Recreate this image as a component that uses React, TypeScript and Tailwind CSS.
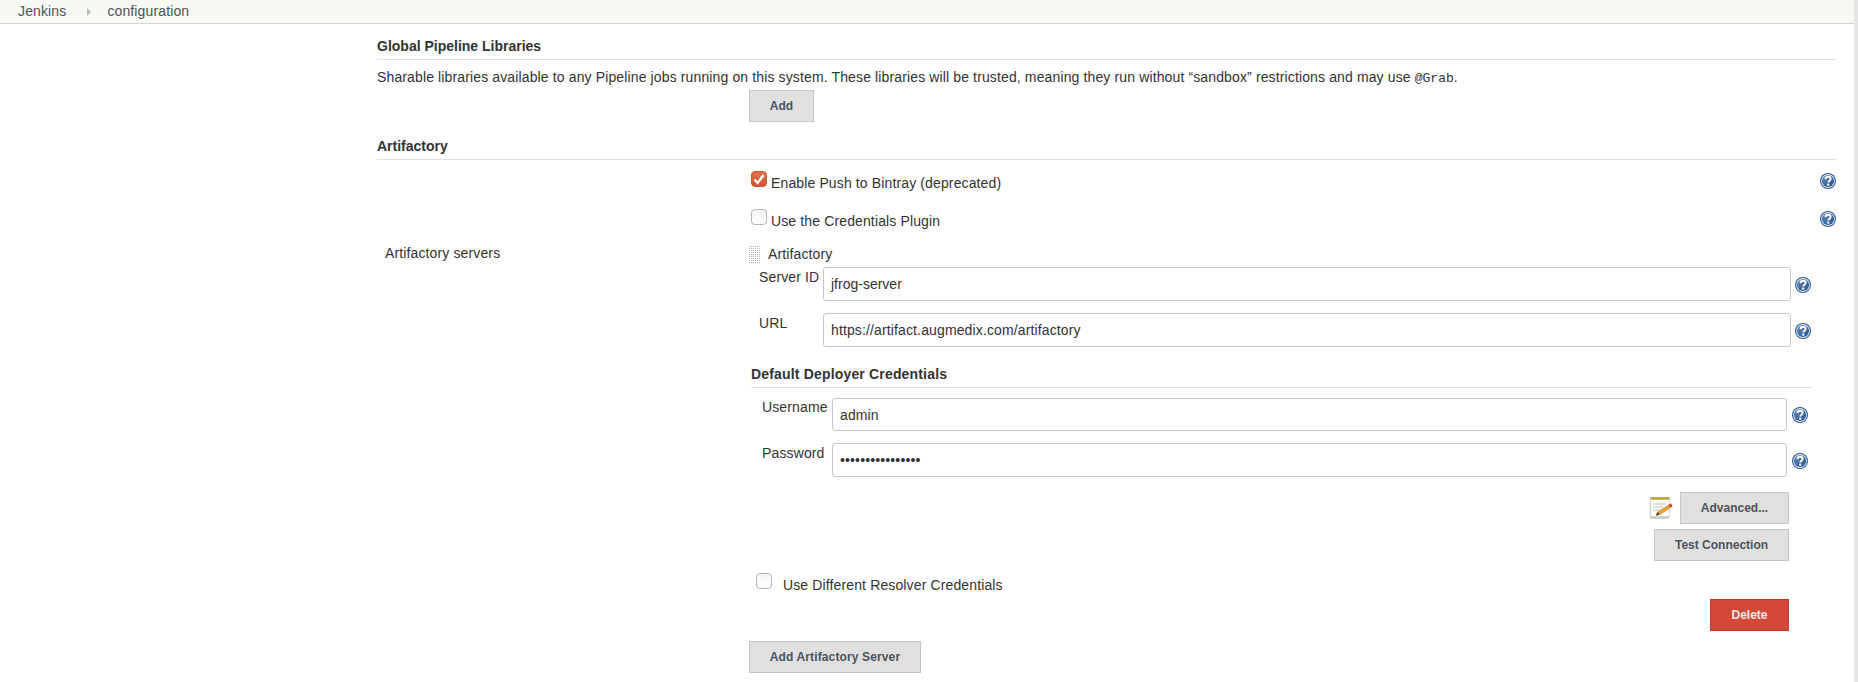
import React from 'react';

const sans = "font-['Liberation_Sans',Arial,sans-serif]";

// Jenkins help bubble
const HelpIcon: React.FC = () => (
  <svg width="16" height="16" viewBox="0 0 16 16" className="block shrink-0">
    <defs>
      <linearGradient id="helpFill" x1="0" y1="0" x2="1" y2="1">
        <stop offset="0" stopColor="#6a8cbb" />
        <stop offset="1" stopColor="#22508f" />
      </linearGradient>
    </defs>
    <circle cx="8" cy="8" r="8" fill="#2f5a98" />
    <circle cx="8" cy="8" r="6.9" fill="#e8eef6" />
    <circle cx="8" cy="8" r="6.1" fill="url(#helpFill)" />
    <path d="M5.5 6.1C5.6 4.5 6.7 3.7 8.1 3.7c1.5 0 2.5.9 2.5 2.2 0 1.9-2.3 1.8-2.3 3.7" fill="none" stroke="#fff" strokeWidth="1.9" />
    <rect x="7.2" y="10.6" width="2.1" height="2" fill="#fff" />
  </svg>
);

const NotepadIcon: React.FC = () => (
  <svg width="24" height="22" viewBox="0 0 24 22" className="block shrink-0">
    <rect x="0.5" y="4" width="20" height="18" rx="2" fill="#cfcfca" />
    <rect x="1.5" y="1" width="19" height="18.5" fill="#fbfbf6" stroke="#c9c9c2" strokeWidth="0.6" />
    <rect x="1.5" y="0" width="19" height="2.8" fill="#bfa64c" />
    <path d="M4 7h13M4 10h10M4 13h6" stroke="#c6c6c6" strokeWidth="1" />
    <path d="M7 18.5l1.5-3.5L19.5 8l2.4 2.6L11 17.5z" fill="#e8a33a" stroke="#b3742a" strokeWidth="0.4" />
    <path d="M19.5 8l2.4 2.6L23.6 9l-2-2.6z" fill="#d0352c" />
    <path d="M7 18.5l1.5-3.5 2.4 2.5z" fill="#4a4036" />
  </svg>
);

const DragHandle: React.FC = () => (
  <svg width="11" height="17" viewBox="0 0 11 17" className="block shrink-0">
    <defs>
      <pattern id="dragDots" width="2" height="2" patternUnits="userSpaceOnUse">
        <rect width="1" height="1" fill="#b4b4b4" />
      </pattern>
    </defs>
    <rect width="11" height="17" fill="url(#dragDots)" />
  </svg>
);

const Checkbox: React.FC<{ checked?: boolean }> = ({ checked }) =>
  checked ? (
    <span className="flex h-4 w-4 shrink-0 items-center justify-center rounded-[4px] border border-[#c9562f] bg-gradient-to-b from-[#e2734c] to-[#cc5530]">
      <svg width="12" height="12" viewBox="0 0 12 12">
        <path d="M1.5 6.5L4.6 10 10.5 2" fill="none" stroke="#fff" strokeWidth="2.2" />
      </svg>
    </span>
  ) : (
    <span className="h-4 w-4 shrink-0 rounded-[4px] border border-[#b8b8b8] bg-gradient-to-b from-[#f4f4f4] to-white" />
  );

const Btn: React.FC<{ className?: string; children: React.ReactNode }> = ({ className, children }) => (
  <button className={`block h-8 border border-[#c6c6c6] bg-[#e0e0e0] text-[12px] font-bold text-[#4d545d] ${className ?? ''}`}>
    {children}
  </button>
);

const Field: React.FC<{ value: string; height?: 'short' | 'tall'; className?: string }> = ({ value, height = 'tall', className }) => (
  <div className={`flex min-w-0 flex-1 items-center rounded-[3px] border border-[#c8c8c8] pl-[7px] pt-[1px] text-[14px] text-[#333] ${height === 'tall' ? 'h-[34px]' : 'h-[33px]'} ${className ?? ''}`}>
    {value}
  </div>
);

const SectionHead: React.FC<{ title: string; className?: string }> = ({ title, className }) => (
  <div className={`flex h-[22px] items-start border-b border-[#e0e0e0] text-[14px] font-bold leading-[16px] text-[#333] ${className ?? 'tracking-normal'}`}>
    {title}
  </div>
);

export default function App() {
  return (
    <div className={`${sans} relative h-[682px] overflow-hidden bg-white text-[14px] tracking-[0.13px] text-[#333]`}>
      {/* breadcrumb bar */}
      <div className="flex h-6 items-center border-b border-[#d5d8d2] bg-[#f6faf2] text-[14px] text-[#4d545d]">
        <span className="ml-[18px]">Jenkins</span>
        <span className="ml-[21px] h-0 w-0 border-y-[4px] border-l-[4px] border-y-transparent border-l-[#b8bdb4]" />
        <span className="ml-[16px]">configuration</span>
      </div>

      <div className="ml-[377px] mr-[22px] pt-[14px]">
        <SectionHead title="Global Pipeline Libraries" />
        <p className="mt-[9px] leading-[16px]">
          Sharable libraries available to any Pipeline jobs running on this system. These libraries will be trusted, meaning they run without “sandbox” restrictions and may use <code className="font-['Liberation_Mono',monospace] text-[13px] leading-none tracking-normal">@Grab</code>.
        </p>
        <div className="ml-[372px] mt-[5px]">
          <Btn className="w-[65px] tracking-normal">Add</Btn>
        </div>

        <div className="mt-[16px]">
          <SectionHead title="Artifactory" />
        </div>

        <div className="flex">
          <div className="w-[372px] shrink-0 pl-2 pt-[85px] leading-[16px]">Artifactory servers</div>
          <div className="min-w-0 flex-1">
            <div className="mt-[11px] flex h-4 items-start pl-[2px]">
              <Checkbox checked />
              <span className="ml-1 mt-[4px] flex-1 leading-[16px]">Enable Push to Bintray (deprecated)</span>
              <span className="mt-[2px]"><HelpIcon /></span>
            </div>
            <div className="mt-[22px] flex h-4 items-start pl-[2px]">
              <Checkbox />
              <span className="ml-1 mt-[4px] flex-1 leading-[16px]">Use the Credentials Plugin</span>
              <span className="mt-[2px]"><HelpIcon /></span>
            </div>

            <div className="mt-[21px] flex h-[17px] items-center">
              <DragHandle />
              <span className="ml-2">Artifactory</span>
            </div>

            <div className="mr-[25px]">
              <div className="mt-[4px] flex items-start">
                <span className="ml-[10px] w-[64px] shrink-0 pt-[2px] leading-[16px]">Server ID</span>
                <Field value="jfrog-server" className="tracking-normal" />
                <span className="ml-[4px] mt-[10px]"><HelpIcon /></span>
              </div>
              <div className="mt-3 flex items-start">
                <span className="ml-[10px] w-[64px] shrink-0 pt-[2px] leading-[16px]">URL</span>
                <Field value="https://artifact.augmedix.com/artifactory" />
                <span className="ml-[4px] mt-[10px]"><HelpIcon /></span>
              </div>

              <div className="ml-[2px] mt-[19px]">
                <SectionHead title="Default Deployer Credentials" className="tracking-[0.17px]" />
              </div>

              <div className="mr-[3px]">
                <div className="mt-[10px] flex items-start">
                  <span className="ml-[13px] w-[70px] shrink-0 pt-[1px] leading-[16px]">Username</span>
                  <Field value="admin" height="short" />
                  <span className="ml-[5px] mt-[9px]"><HelpIcon /></span>
                </div>
                <div className="mt-3 flex items-start">
                  <span className="ml-[13px] w-[70px] shrink-0 pt-[2px] leading-[16px]">Password</span>
                  <Field value="••••••••••••••••" />
                  <span className="ml-[5px] mt-[10px]"><HelpIcon /></span>
                </div>

                <div className="mr-[19px]">
                  <div className="mt-[15px] flex items-center justify-end gap-[7px]">
                    <NotepadIcon />
                    <Btn className="w-[109px] tracking-normal">Advanced...</Btn>
                  </div>
                  <div className="mt-[5px] flex justify-end">
                    <Btn className="w-[135px] tracking-normal">Test Connection</Btn>
                  </div>
                  <div className="ml-[7px] mt-3 flex h-4 items-start">
                    <Checkbox />
                    <span className="ml-[11px] mt-[4px] leading-[16px]">Use Different Resolver Credentials</span>
                  </div>
                  <div className="mt-[10px] flex justify-end">
                    <button className="block h-8 w-[79px] border border-[#c4392b] bg-[#d24939] text-[12px] font-bold tracking-normal text-[#f0e8e6]">Delete</button>
                  </div>
                </div>
              </div>
            </div>

            <div className="mt-[10px]">
              <Btn className="w-[172px]">Add Artifactory Server</Btn>
            </div>
          </div>
        </div>
      </div>

      {/* scrollbar strip at the window edge */}
      <div className="absolute bottom-0 right-0 top-0 w-1 bg-[#e6e6e6]" />
    </div>
  );
}
